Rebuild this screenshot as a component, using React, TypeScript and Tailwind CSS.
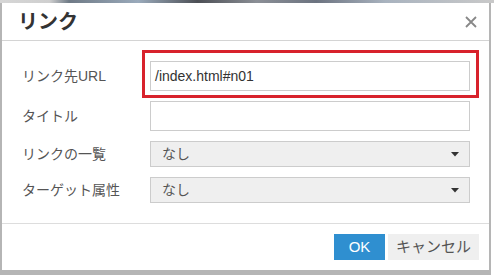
import React from "react";

const font = { fontFamily: '"Liberation Sans", "Noto Sans CJK JP", sans-serif' };

function Caret() {
  return (
    <svg width="8" height="5" viewBox="0 0 8 5" className="shrink-0">
      <path d="M0 0 H8 L4 4.5 Z" fill="#333" />
    </svg>
  );
}

function SelectBox({ value }: { value: string }) {
  return (
    <div className="w-[320px] h-[26px] bg-[#efefef] border border-[#cccccc] flex items-center justify-between pl-[11px] pr-[10px] text-[14px] text-[#555]">
      <span>{value}</span>
      <Caret />
    </div>
  );
}

function Row({ label, children }: { label: string; children: React.ReactNode }) {
  return (
    <div className="flex items-center">
      <div className="w-[128px] text-[14px] text-[#555] leading-none">{label}</div>
      {children}
    </div>
  );
}

export default function App() {
  return (
    <div className="w-[494px] h-[275px] flex flex-col bg-white overflow-hidden" style={font}>
      <div className="h-[3px] shrink-0 bg-[linear-gradient(90deg,#d6d6d6_0%,#cfcfcf_10%,#6f7a86_14%,#9aaabb_28%,#4c4f55_40%,#8b8f96_52%,#6c7380_64%,#a9b3bf_78%,#c9c9c9_100%)]" />
      <div className="flex flex-1">
        <div className="w-[491px] flex flex-col border-l-2 border-r-2 border-b-[5px] border-[#b5b5b5] bg-white">
          <div className="h-[37px] shrink-0 flex items-center justify-between pl-[16px] pr-[12px] border-b border-[#d4d4d4] box-content">
            <span className="text-[20px] font-bold text-[#333] leading-none">リンク</span>
            <svg width="12" height="12" viewBox="0 0 12 12">
              <path d="M1 1 L11 11 M11 1 L1 11" stroke="#888" strokeWidth="1.8" />
            </svg>
          </div>
          <div className="flex flex-col gap-[10px] pt-[20px] pb-[20px] pl-[20px]">
            <Row label="リンク先URL">
              <div className="relative">
                <div className="absolute top-[-11px] left-[-8px] right-[-9px] bottom-[-7px] border-[3px] border-[#d8222c]" />
                <div className="relative w-[320px] h-[30px] border border-[#cccccc] bg-white flex items-center pl-[4px] text-[14px] text-[#333]">
                  /index.html#n01
                </div>
              </div>
            </Row>
            <Row label="タイトル">
              <div className="w-[320px] h-[30px] border border-[#cccccc] bg-white" />
            </Row>
            <Row label="リンクの一覧">
              <SelectBox value="なし" />
            </Row>
            <Row label="ターゲット属性">
              <SelectBox value="なし" />
            </Row>
          </div>
          <div className="flex-1 border-t border-[#dddddd] flex items-center justify-end gap-[3px] pr-[10px]">
            <div className="w-[51px] h-[26px] bg-[#2f8fd0] text-white text-[15px] flex items-center justify-center">OK</div>
            <div className="w-[91px] h-[26px] bg-[#efefef] text-[#555] text-[15px] flex items-center justify-center">キャンセル</div>
          </div>
        </div>
        <div className="flex-1 bg-white" />
      </div>
    </div>
  );
}
